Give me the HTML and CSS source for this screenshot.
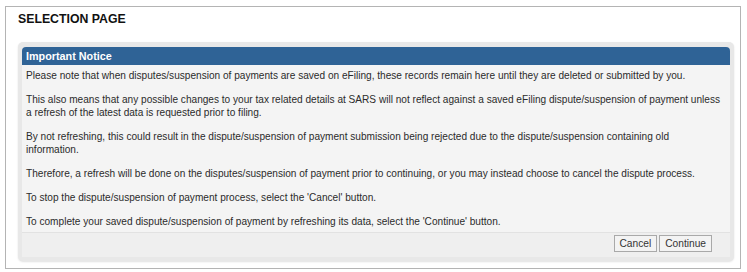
FILE: index.html
```html
<!DOCTYPE html>
<html lang="en">
<head>
    <meta charset="UTF-8">
    <title>Selection Page</title>
    <link rel="stylesheet" href="styles.css">
</head>
<body>

    <div class="page">
        <h1>SELECTION PAGE</h1>

        <div class="notice">
            <div class="notice-header">Important Notice</div>
            <div class="notice-body">
                <p>Please note that when disputes/suspension of payments are saved on eFiling, these records remain here until they are deleted or submitted by you.</p>
                <p>This also means that any possible changes to your tax related details at SARS will not reflect against a saved eFiling dispute/suspension of payment unless a refresh of the latest data is requested prior to filing.</p>
                <p>By not refreshing, this could result in the dispute/suspension of payment submission being rejected due to the dispute/suspension containing old information.</p>
                <p>Therefore, a refresh will be done on the disputes/suspension of payment prior to continuing, or you may instead choose to cancel the dispute process.</p>
                <p>To stop the dispute/suspension of payment process, select the 'Cancel' button.</p>
                <p>To complete your saved dispute/suspension of payment by refreshing its data, select the 'Continue' button.</p>
            </div>
            <div class="notice-footer">
                <button>Cancel</button>
                <button>Continue</button>
            </div>
        </div>
    </div>

</body>
</html>
```

FILE: styles.css
```css
body {
    font-family: Arial, "Liberation Sans", sans-serif;
    background-color: white;
    margin: 0;
    padding: 6px 6px 0 5px;
}
.page {
    border: 1px solid #b4b4b4;
    height: 263px;
    box-sizing: border-box;
    padding: 0 6px 0 12px;
}
h1 {
    font-size: 12.3px;
    font-weight: bold;
    color: #111;
    margin: 4px 0 0 0;
    line-height: 16px;
}
.notice {
    margin-top: 15px;
    background-color: #e8e8e8;
    border-radius: 5px;
    padding: 5px 4px 4px 4px;
    box-shadow: 0 1px 2px rgba(0, 0, 0, 0.12);
}
.notice-header {
    background-color: #2f6396;
    color: white;
    font-size: 10.8px;
    font-weight: bold;
    line-height: 18px;
    padding-left: 4px;
    border-radius: 4px 4px 0 0;
}
.notice-body {
    background-color: #f4f4f4;
    padding: 4px 6px 4px 4px;
    font-size: 10.1px;
    line-height: 13px;
    color: #2b2b2b;
}
.notice-body p {
    margin: 0 0 11px 0;
}
.notice-body p:last-child {
    margin-bottom: 0;
}
.notice-footer {
    background-color: #efefef;
    border-top: 1px solid #e2e2e2;
    padding: 2px 18px 5px 0;
    display: flex;
    justify-content: flex-end;
    gap: 2px;
}
.notice-footer button {
    font-family: Arial, "Liberation Sans", sans-serif;
    font-size: 10.2px;
    color: #333;
    background-color: #f3f3f3;
    border: 1px solid #a9a9a9;
    height: 17px;
    padding: 0 5px;
    line-height: 15px;
    border-radius: 0;
}
```
